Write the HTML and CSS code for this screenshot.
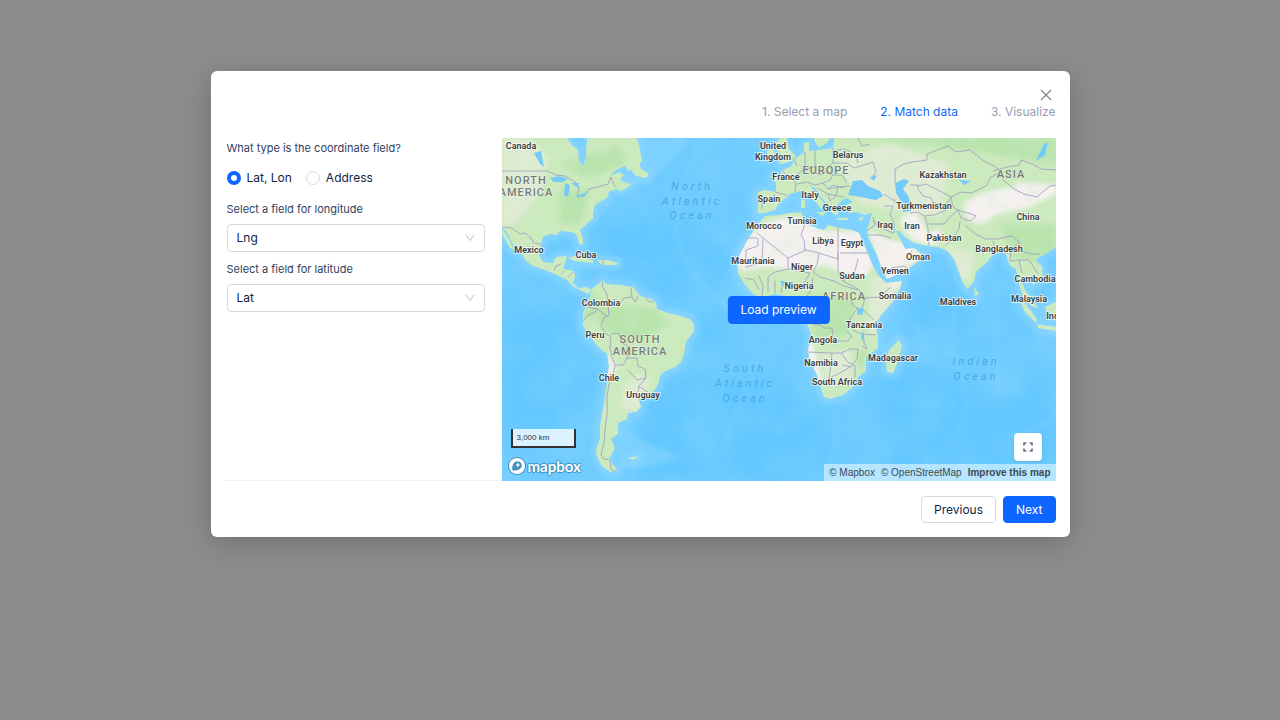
FILE: index.html
```html
<!DOCTYPE html>
<html lang="en">
<head>
<meta charset="utf-8">
<meta name="viewport" content="width=device-width, initial-scale=1">
<title>Match data</title>
<link rel="stylesheet" href="styles.css">
</head>
<body>
<main class="dialog" role="dialog" aria-modal="true" aria-label="Match data">
  <header class="dialog-header">
    <button class="close" type="button" aria-label="Close">
      <svg viewBox="0 0 12 12" width="12" height="12"><path d="M1 1l10 10M11 1L1 11"/></svg>
    </button>
    <ol class="steps">
      <li>1. Select a map</li>
      <li class="current" aria-current="step">2. Match data</li>
      <li>3. Visualize</li>
    </ol>
  </header>

  <div class="content">
    <form class="fields">
      <fieldset class="type">
        <legend>What type is the coordinate field?</legend>
        <div class="options">
          <label><input type="radio" name="type" checked>Lat, Lon</label>
          <label><input type="radio" name="type">Address</label>
        </div>
      </fieldset>
      <div class="field">
        <label for="lng">Select a field for longitude</label>
        <div class="select">
          <select id="lng"><option>Lng</option></select>
          <svg viewBox="0 0 10 8" width="10" height="8"><path d="M1 1l4 5.500l4-5.500"/></svg>
        </div>
      </div>
      <div class="field">
        <label for="lat">Select a field for latitude</label>
        <div class="select">
          <select id="lat"><option>Lat</option></select>
          <svg viewBox="0 0 10 8" width="10" height="8"><path d="M1 1l4 5.500l4-5.500"/></svg>
        </div>
      </div>
    </form>

    <section class="map" aria-label="Map preview">
      <svg class="world" viewBox="502 139 554 343" preserveAspectRatio="xMidYMid slice">
        <defs>
          <path id="america-north" d="M495 132H566L568 141L573 147L578 151L579 162L583 167L586 160V151L588 132H634L639 146L642 162L635 169L628 172L625 167L616 171L610 177L619 173L624 176L620 181L630 185L633 184L624 191L618 192L616 188L609 193L607 199L601 202L595 206L593 214V219L588 224L580 231L583 240V245L580 246L576 235L571 233L560 232L557 236L550 235L543 238L541 245L539 256L543 263L553 264L556 258L567 257L565 264L563 270L574 272L575 277L573 284L578 289L587 288L592 291L588 295L582 292L574 288L567 281L557 276L545 271L533 267L525 261L522 255L514 248L508 235L502 228H495ZM502 230L508 238L514 251L510 249L502 235Z"/>
          <path id="america-south" d="M592 290L603 281L606 285L620 286L633 288L640 297L652 300L656 304L657 310L668 314L681 317L690 320L694 325V332L686 343L684 355L681 363L675 368L664 373L660 377L658 386L650 397L642 400L638 398L641 408L636 413L628 414L627 420L618 424L618 435L611 440L615 449L609 460L617 471L610 473L602 467L597 458L596 450L600 440V427L604 403L607 383L609 367L607 355L597 347L590 337L583 327V313L588 305Z"/>
          <path id="eurasia" d="M758 193L765 191L776 193L776 184L771 178L780 176L782 171L790 168L797 158L804 154V144L809 143V152L818 151L833 149L835 132H1065V245L1056 248L1047 254L1039 258L1036 262L1042 267L1043 279L1033 286L1029 278L1021 281L1025 291L1032 300L1038 309L1033 308L1023 298L1019 285L1016 270L1010 267L1005 253L996 252L988 262L976 273L974 283L967 290L963 284L955 262L952 257L946 251L938 248L928 247L914 244L905 238L899 232L896 232L902 243L905 250L914 249L922 255L918 262L907 271L887 280L883 273L877 256L868 238L867 231L872 214L864 216L857 213L849 214L846 206L853 203L846 199L840 203L837 207L838 216L833 215L827 205L820 197L815 189L811 187L816 195L824 204L821 210L816 203L808 196L800 192L790 195L786 199L779 204L775 211L765 214L758 214Z"/>
          <path id="africa" d="M765 217L779 216L790 214L801 213L803 218L807 225L819 230L824 231L828 226L840 229L852 231L859 234L866 250L872 265L878 276L886 284L902 282L900 290L892 304L881 316L875 326L878 338V349L866 358V372L858 378L854 387L843 396L830 400L824 398L817 376L809 359L808 350L812 338L807 324L798 309L790 298L775 295L760 299L752 294L743 283L738 274L737 261L742 251L748 240L757 226Z"/>
          <path id="isles" d="M773 146L781 139H787L789 150L795 156V161L783 165L778 164L784 158L779 154ZM767 152L774 150L775 158L767 160ZM812 132H833L827 144L819 149L815 143ZM899 341L902 347L897 365L893 374L887 373L886 363L889 351ZM568 259L578 256L594 262L593 264L574 262ZM597 261L608 261L618 264L617 266L602 266ZM1019 301L1026 305L1037 320L1036 324L1025 313ZM1037 325L1056 328V332L1038 329ZM1045 308L1056 303V320L1048 317ZM974 288L979 295L975 297ZM631 171L639 163L641 170L649 175L646 179L636 177ZM610 186L618 189L612 192ZM816 213L826 213L823 217ZM801 200L805 202V209H801ZM837 219H848V221H837ZM858 220L865 217L861 222ZM628 459L638 457L634 461Z"/>
          <clipPath id="land">
            <use href="#america-north"/><use href="#america-south"/><use href="#eurasia"/><use href="#africa"/><use href="#isles"/>
          </clipPath>
          <filter id="soft" x="-30%" y="-30%" width="160%" height="160%"><feGaussianBlur stdDeviation="7"/></filter>
          <filter id="slight"><feGaussianBlur stdDeviation="2"/></filter>
          <filter id="relief" x="0" y="0" width="100%" height="100%">
            <feTurbulence type="fractalNoise" baseFrequency=".022" numOctaves="4" seed="8"/>
            <feColorMatrix values="0 0 0 0 .64  0 0 0 0 .88  0 0 0 0 1  2.200 0 0 0 -.92"/>
          </filter>
          <filter id="woods" x="0" y="0" width="100%" height="100%">
            <feTurbulence type="fractalNoise" baseFrequency=".05" numOctaves="3" seed="4"/>
            <feColorMatrix values="0 0 0 0 .64  0 0 0 0 .84  0 0 0 0 .6  2.600 0 0 0 -1.150"/>
          </filter>
        </defs>

        <rect class="sea" x="502" y="139" width="554" height="343"/>
        <g class="deep" filter="url(#soft)">
          <path d="M600 215L650 197L690 225L724 255L725 345L690 340L670 300L605 260ZM650 400L700 370L785 380L820 420L840 482H630ZM880 380L930 370L1000 400L1056 370V482H890ZM925 275L960 300L970 350L900 330ZM502 290L570 310L590 370L580 430L502 430Z"/>
        </g>
        <g class="shelf-wide" filter="url(#slight)">
          <use href="#america-north"/><use href="#america-south"/><use href="#eurasia"/><use href="#africa"/><use href="#isles"/>
        </g>
        <g class="shelf" filter="url(#slight)">
          <path d="M615 420Q640 445 680 457Q665 468 620 470ZM587 139H690L650 185L600 190Z"/>
          <path class="ridge" d="M700 139Q680 190 675 235Q690 280 730 310T742 400T735 470M740 400Q780 395 790 370T812 348M830 410Q850 440 820 475M905 320Q930 335 925 355M995 280L998 390L1026 394M956 300L950 350Q970 390 965 415T920 470M1010 440L1056 420"/>
        </g>
        <rect x="502" y="139" width="554" height="343" filter="url(#relief)" opacity=".13"/>

        <g class="land">
          <use href="#america-north"/><use href="#america-south"/><use href="#eurasia"/><use href="#africa"/><use href="#isles"/>
        </g>
        <g clip-path="url(#land)">
          <g filter="url(#slight)">
            <path class="pale" d="M502 139H530L548 160L542 190L520 220L502 230ZM835 160L890 145L950 165L940 220L860 205ZM945 245L975 255L970 280L960 280ZM870 280L900 275L880 340L868 330ZM640 374L652 380L638 414L620 408L625 385ZM822 355L850 350L852 375L828 388Z"/>
            <path class="lush" d="M560 165L620 145L625 165L590 178L570 172ZM560 190L590 190L580 225L560 225ZM592 305L655 310L670 325L640 340L610 335L600 325ZM807 295L855 300L850 335L815 340ZM865 139H1056V165L960 150ZM1000 225H1056V270L1010 255ZM588 292L600 300L592 320L585 320ZM856 355L870 350L860 372Z"/>
            <path class="desert" d="M760 226L785 218L804 219L822 231L860 232L869 252L875 265L866 277L840 274L825 266L805 272L768 268L740 272L736 258L746 241ZM868 230L882 238L899 243L920 251L918 262L888 281L877 262ZM965 203L984 193L1025 186L1056 188L1055 196L1035 205L1029 209L994 216L983 226L969 222L963 210ZM900 219L914 213L925 226L930 246L912 241L902 229ZM928 233L942 230L935 246H928ZM608 354L617 367L611 380L606 373ZM807 341L812 341L820 370L823 382L817 380L807 360ZM890 283L903 280L900 288L892 291ZM1015 183L1056 186V193L1018 190Z"/>
          </g>
          <rect x="502" y="139" width="554" height="343" filter="url(#woods)" opacity=".28"/>
          <path class="borders" d="M502 172H547L556 176L565 177L575 183L579 188L577 198L584 197L589 190L601 187L608 185L611 178L614 186L616 188M502 228L512 229L520 235L525 234L531 239L534 244L541 245M554 272L556 267L561 265M561 275L564 272M568 278L573 273M603 261V266M603 281L602 287L607 295L608 304L609 317L604 318L601 327L606 335L611 338L610 349L612 358L615 366L613 377L609 385L607 398V416L605 430L604 444L601 456L604 460L610 461L611 470L617 473M583 322L587 317L595 313L597 310L587 308M597 310L607 317M620 304L624 299L632 298L631 289M632 298L635 303L638 297M645 297L648 302L653 303M611 335L619 334L622 344L630 348L627 359L623 366L615 366M627 359L637 359L638 367L645 370L646 379L637 381L628 371M646 379L639 387L649 394M639 387L638 394M758 198L762 200V210M775 193L787 196M782 171L787 177L793 179L796 185L795 193M793 179L799 174L805 170L805 153M797 167L793 159M813 173L820 176L827 172L833 176L842 176L847 184M815 151V168L805 170M797 185L807 183L815 186L823 184L828 190L838 188L836 197L830 202L828 195L817 189M833 176L830 181L823 184M828 190L833 186L843 189M838 188L850 187M828 195L838 197L844 198M833 149L833 164L826 170M833 164H847L854 169L864 166L873 163L876 173L870 181M833 152L844 150L855 155L858 164M858 139L862 147L870 145M895 184V170L904 165L912 163L927 161L927 155L948 147L956 153L970 151L984 162L994 167L1002 173L991 178L986 187L971 194L961 193L951 198L946 206L934 204L931 199L923 197L918 190V186L910 186M918 187L926 185L940 192L951 198M993 172L1007 168L1019 166L1021 161L1032 165L1041 170L1056 171M1002 180L1014 190L1024 195L1037 198L1050 187L1056 186M951 198L953 208L958 211L961 219L970 222L976 217L968 214L957 211M902 209L890 199L884 195M884 207H893L890 215L894 224L894 234L885 231L873 222M893 199L899 205M910 214L918 213L924 217L934 216L946 211M925 217L928 230L929 247M928 225H944L950 218L958 211M945 247L951 241L959 230L960 222M965 226L975 235L986 240L997 240L1012 237L1019 243L1011 251L1010 262M993 242L995 249L1000 254M1019 243L1023 253L1033 255L1040 255M1019 261L1022 274M1019 261L1029 261L1038 275M1010 262L1019 261M867 232L875 226L873 218M867 236L880 236L891 239M886 276L891 269L905 267L908 270M907 257L912 252M758 239V247L746 251V264M803 217L805 225L801 236L804 241L805 252M757 234L763 239L788 259M763 240L762 264L745 268M757 239H745M788 259L806 251L819 254L838 260V228M840 254H868M838 254V273L843 282L858 290M819 254L817 265L813 273L820 278L834 282L841 286L858 291M788 259L788 270L775 273L768 278M788 270L810 274L804 284L799 288M768 278L768 293M775 282V294M783 282L781 294M745 279L754 281L759 291M759 277L763 287L762 297M813 278L812 290L805 299M843 282L855 272L858 260M858 290L865 299L879 298L891 288M851 299L853 307L858 309L850 319V328M865 299L862 310L874 321M853 331L861 335L876 336M808 324L820 326L824 329L832 329L833 342L848 342L852 337L846 332M808 353L832 354L841 354L850 350L858 350L857 360L851 368L842 366M841 354L848 363L855 367L855 379M832 354L830 373L829 379L840 374L850 368M863 333L864 344L867 350L862 347M848 388L853 383M806 308H817L829 298"/>
          <path class="lakes" d="M550 179L559 177L568 180L563 183L554 183ZM565 184L570 186L568 198L564 196ZM571 184L579 184L578 189ZM576 197L588 193L583 198ZM534 154L541 152L544 168L540 165ZM848 196L853 182L862 181L868 187L880 192L883 197L876 201L861 198ZM870 178L877 176L874 182ZM895 184L904 180L909 182L903 190L909 198L911 212L903 213L902 204L896 194ZM959 181L971 182L964 186ZM1044 145L1048 143L1045 156L1036 162ZM858 309L864 310L862 316L857 315ZM862 333L865 342L861 340ZM780 282L786 282L783 287Z"/>
        </g>

        <g class="oceans">
          <text x="692" y="191">North</text><text x="692" y="206">Atlantic</text><text x="692" y="220">Ocean</text>
          <text x="745" y="373">South</text><text x="745" y="388">Atlantic</text><text x="745" y="403">Ocean</text>
          <text x="976" y="366">Indian</text><text x="976" y="381">Ocean</text>
        </g>
        <g class="continents">
          <text x="526" y="185">NORTH</text><text x="526" y="197">AMERICA</text>
          <text x="640" y="344">SOUTH</text><text x="640" y="356">AMERICA</text>
          <text x="826" y="175">EUROPE</text><text x="844" y="301">AFRICA</text><text x="1011" y="179">ASIA</text>
        </g>
        <g class="countries">
          <text x="521" y="150">Canada</text><text x="529" y="254">Mexico</text><text x="586" y="259">Cuba</text>
          <text x="601" y="307">Colombia</text><text x="595" y="339">Peru</text><text x="609" y="382">Chile</text><text x="643" y="399">Uruguay</text>
          <text x="773" y="150">United</text><text x="773" y="161">Kingdom</text><text x="786" y="181">France</text>
          <text x="769" y="203">Spain</text><text x="810" y="199">Italy</text><text x="837" y="212">Greece</text><text x="848" y="159">Belarus</text>
          <text x="764" y="230">Morocco</text><text x="802" y="225">Tunisia</text><text x="823" y="245">Libya</text><text x="852" y="247">Egypt</text>
          <text x="753" y="265">Mauritania</text><text x="802" y="271">Niger</text><text x="852" y="280">Sudan</text><text x="799" y="290">Nigeria</text>
          <text x="943" y="179">Kazakhstan</text><text x="924" y="210">Turkmenistan</text><text x="885" y="229">Iraq</text><text x="912" y="230">Iran</text>
          <text x="944" y="242">Pakistan</text><text x="1028" y="221">China</text><text x="999" y="253">Bangladesh</text><text x="918" y="261">Oman</text>
          <text x="895" y="275">Yemen</text><text x="895" y="300">Somalia</text><text x="958" y="306">Maldives</text><text x="1035" y="283">Cambodia</text>
          <text x="1029" y="303">Malaysia</text><text x="1066" y="320">Indonesia</text><text x="864" y="329">Tanzania</text><text x="823" y="344">Angola</text>
          <text x="821" y="367">Namibia</text><text x="893" y="362">Madagascar</text><text x="837" y="386">South Africa</text>
        </g>
      </svg>

      <button class="button primary load" type="button">Load preview</button>
      <div class="scale">3,000 km</div>
      <div class="brand">
        <svg viewBox="0 0 20 20" width="20" height="20">
          <circle cx="10" cy="10" r="9" fill="#3d8fb8"/><circle cx="10" cy="10" r="8" fill="#fff"/>
          <path fill="#438fb8" d="M5.300 14.500C4.900 10.500 5.800 7.300 8.200 5.800C10.800 4.200 14.200 5.700 14.700 8.700C15.200 12.900 10.200 15.200 5.300 14.500Z"/>
          <path fill="#fff" d="M10.800 6.300l.8 1.900 1.900.8-1.900.8-.8 1.900-.8-1.900-1.900-.8 1.900-.8z"/>
        </svg>
        <span>mapbox</span>
      </div>
      <button class="fullscreen" type="button" aria-label="Fullscreen">
        <svg viewBox="0 0 10 10" width="10" height="10"><path d="M1 3.500V1h2.500M6.500 1H9v2.500M9 6.500V9H6.500M3.500 9H1V6.500"/></svg>
      </button>
      <div class="credits">
        <a href="#">© Mapbox</a><a href="#">© OpenStreetMap</a><a class="improve" href="#">Improve this map</a>
      </div>
    </section>
  </div>

  <footer class="actions">
    <button class="button" type="button">Previous</button>
    <button class="button primary" type="button">Next</button>
  </footer>
</main>
</body>
</html>
```

FILE: styles.css
```css
* { box-sizing: border-box; }

body {
  margin: 0;
  min-height: 100vh;
  padding: 71px 16px 32px;
  background: #8c8c8c;
  color: #112549;
  font: 12px/18px Inter, "Liberation Sans", sans-serif;
}

button, select { font: inherit; color: inherit; }
button { cursor: pointer; }

.dialog {
  width: 100%;
  max-width: 859px;
  margin: 0 auto;
  padding: 16px 14px 14px;
  background: #fff;
  border-radius: 6px;
  box-shadow: 0 6px 28px rgba(0, 0, 0, .2);
}

.dialog-header {
  display: flex;
  flex-direction: column;
  align-items: flex-end;
  padding-bottom: 17px;
}

.close {
  display: grid;
  place-items: center;
  width: 20px;
  height: 16px;
  padding: 0;
  border: 0;
  background: none;
}
.close svg { stroke: #858585; stroke-width: 1.2; fill: none; }

.steps {
  display: flex;
  gap: 33px;
  margin: 0;
  padding: 0;
  list-style: none;
  color: #969daf;
}
.steps .current { color: #0d66ff; }

.content {
  display: grid;
  grid-template-columns: 1fr 2fr;
}

.fields {
  padding: 0 17px 0 2px;
  border-bottom: 1px solid #f0f0f0;
}
.type { margin: 0; padding: 0; border: 0; }
.type legend, .field > label {
  display: block;
  padding: 0;
  font-size: 11px;
  line-height: 20px;
  color: #30415f;
}
.options {
  display: flex;
  gap: 14px;
  padding: 11px 0 12px;
}
.options label {
  display: flex;
  align-items: center;
  gap: 6px;
}
.options input {
  appearance: none;
  width: 14px;
  height: 14px;
  margin: 0;
  border: 1px solid #d9d9d9;
  border-radius: 50%;
}
.options input:checked { border: 4px solid #0d66ff; }

.field { margin-bottom: 7px; }
.field > label { margin-bottom: 5px; }
.select { display: grid; align-items: center; }
.select select, .select svg { grid-area: 1 / 1; }
.select select {
  appearance: none;
  width: 100%;
  height: 28px;
  padding: 0 28px 0 9px;
  background: #fff;
  border: 1px solid #d9d9d9;
  border-radius: 4px;
}
.select svg {
  justify-self: end;
  margin-right: 10px;
  fill: none;
  stroke: #bfbfbf;
  pointer-events: none;
}

.map {
  position: relative;
  min-height: 343px;
  overflow: hidden;
  background: #63c8ff;
}
.world {
  position: absolute;
  inset: 0;
  width: 100%;
  height: 100%;
}
.sea { fill: #6dcbff; }
.deep { fill: #64c8ff; }
.shelf-wide { fill: none; stroke: #80d2ff; stroke-width: 11; stroke-linejoin: round; }
.shelf { fill: #86d5ff; opacity: .6; }
.ridge { fill: none; stroke: #8ad7ff; stroke-width: 4; opacity: .4; }
.land { fill: #cbeabd; }
.pale { fill: #dfecd3; }
.lush { fill: #b9e4ad; }
.desert { fill: #f5f1f0; }
.borders { fill: none; stroke: #9e9bc3; stroke-width: .8; stroke-linejoin: round; }
.lakes { fill: #74cbfb; }
.world text {
  text-anchor: middle;
  font-family: Roboto, "Liberation Sans", sans-serif;
  paint-order: stroke;
  stroke-linejoin: round;
}
.countries text {
  font-size: 9px;
  font-weight: 600;
  fill: #3c3e40;
  stroke: rgba(255, 255, 255, .65);
  stroke-width: 2px;
}
.continents text {
  font-size: 11px;
  font-weight: 500;
  letter-spacing: 1px;
  fill: #777c76;
  stroke: rgba(255, 255, 255, .5);
  stroke-width: 1px;
}
.oceans text {
  font-size: 11px;
  font-style: italic;
  letter-spacing: 3px;
  fill: #48aae6;
}

.button {
  height: 27px;
  padding: 0 12px;
  background: #fff;
  border: 1px solid #d9d9d9;
  border-radius: 4px;
}
.button.primary {
  background: #0d66ff;
  border-color: #0d66ff;
  color: #fff;
}
.load {
  position: absolute;
  top: 50%;
  left: 50%;
  transform: translate(-50%, -50%);
  height: 28px;
  white-space: nowrap;
}
.scale {
  position: absolute;
  left: 9px;
  bottom: 33px;
  width: 65px;
  padding: 0 4px;
  background: rgba(255, 255, 255, .75);
  border: 2px solid #333;
  border-top: 0;
  color: #333;
  font: 8px/17px "Liberation Sans", Arial, sans-serif;
}
.brand {
  position: absolute;
  left: 5px;
  bottom: 5px;
  display: flex;
  align-items: center;
  gap: 1px;
  color: #fff;
  font: 700 15px/20px Lato, sans-serif;
  text-shadow: 1px 0 1px #3d8fb8, -1px 0 1px #3d8fb8, 0 1px 1px #3d8fb8, 0 -1px 1px #3d8fb8;
}
.fullscreen {
  position: absolute;
  right: 14px;
  bottom: 20px;
  display: grid;
  place-items: center;
  width: 28px;
  height: 28px;
  padding: 0;
  background: #fff;
  border: 0;
  border-radius: 4px;
  box-shadow: 0 1px 3px rgba(0, 0, 0, .15);
}
.fullscreen svg { fill: none; stroke: #263653; stroke-width: 1.2; }
.credits {
  position: absolute;
  right: 0;
  bottom: 0;
  display: flex;
  gap: 6px;
  padding: 0 5px;
  background: rgba(255, 255, 255, .5);
  font: 10px/17px "Liberation Sans", Arial, sans-serif;
  white-space: nowrap;
}
.credits a { color: #404a50; text-decoration: none; }
.credits .improve { font-weight: 700; }

.actions {
  display: flex;
  justify-content: flex-end;
  gap: 7px;
  padding-top: 15px;
}
```
